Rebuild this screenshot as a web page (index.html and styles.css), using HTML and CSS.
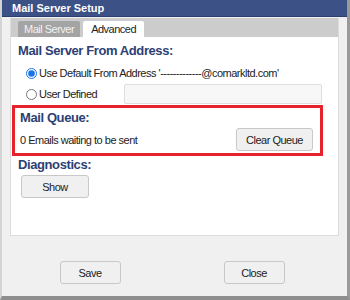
FILE: index.html
```html
<!DOCTYPE html>
<html lang="en">
<head>
    <meta charset="UTF-8">
    <title>Mail Server Setup</title>
    <link rel="stylesheet" href="styles.css">
</head>
<body>

<div class="dialog">
    <div class="titlebar">Mail Server Setup</div>

    <div class="panel">
        <div class="tabs">
            <div class="tab">Mail Server</div>
            <div class="tab active">Advanced</div>
        </div>

        <div class="content">
            <h3>Mail Server From Address:</h3>
            <label class="radio-row first-row">
                <input type="radio" name="from" checked>
                <span>Use Default From Address '-------------@comarkltd.com'</span>
            </label>
            <div class="radio-row user-row">
                <label class="user-label">
                    <input type="radio" name="from">
                    <span>User Defined</span>
                </label>
                <input type="text" class="text-input" disabled>
            </div>

            <div class="queue-box">
                <h3>Mail Queue:</h3>
                <div class="queue-row">
                    <span>0 Emails waiting to be sent</span>
                    <button class="btn clear-btn">Clear Queue</button>
                </div>
            </div>

            <h3>Diagnostics:</h3>
            <button class="btn show-btn">Show</button>
        </div>
    </div>

    <div class="footer">
        <button class="btn footer-btn">Save</button>
        <button class="btn footer-btn">Close</button>
    </div>
</div>

</body>
</html>
```

FILE: styles.css
```css
body {
    margin: 0;
    font-family: "Liberation Sans", Arial, sans-serif;
}
.dialog {
    width: 350px;
    height: 300px;
    box-sizing: border-box;
    background-color: #f0f0f0;
    border-left: 2px solid #d4d4d4;
    border-right: 3px solid #9a9a9a;
    border-bottom: 4px solid #8e8e8e;
    display: flex;
    flex-direction: column;
}
.titlebar {
    height: 16px;
    line-height: 16px;
    background-color: #3c5186;
    border-bottom: 1px solid #2c3e6e;
    color: white;
    font-size: 11px;
    font-weight: bold;
    padding-left: 10px;
}
.panel {
    margin: 1px 8px 0 8px;
    height: 217px;
    background-color: white;
    border: 1px solid #dcdcdc;
    border-top: none;
}
.tabs {
    background-color: #cccccc;
    height: 19px;
    display: flex;
    align-items: flex-end;
    gap: 3px;
    padding-left: 7px;
}
.tab {
    height: 16px;
    line-height: 16px;
    padding: 0 6px;
    font-size: 11px;
    letter-spacing: -0.5px;
    background-color: #a4a4a4;
    color: #f2f2f2;
    border-radius: 2px 2px 0 0;
}
.tab.active {
    background-color: white;
    color: #222;
    padding: 0 8px;
}
.content {
    padding: 0 7px;
}
h3 {
    margin: 0;
    font-size: 13px;
    line-height: 17px;
    letter-spacing: -0.4px;
    font-weight: bold;
    color: #2d3f75;
}
.content > h3:first-child {
    padding-top: 5px;
}
.radio-row {
    display: flex;
    align-items: center;
    font-size: 11px;
    letter-spacing: -0.5px;
    color: #222;
    margin-left: 8px;
    height: 20px;
}
.first-row {
    margin-top: 3px;
    height: 22px;
}
.radio-row input[type="radio"] {
    width: 11px;
    height: 11px;
    margin: 0 2px 0 0;
    accent-color: #1a73e8;
}
.user-label {
    display: flex;
    align-items: center;
    width: 98px;
}
.text-input {
    width: 198px;
    height: 20px;
    box-sizing: border-box;
    border: 1px solid #dedede;
    border-radius: 2px;
    background-color: #f7f7f7;
}
.queue-box {
    margin: 1px 0 0 -6px;
    width: 311px;
    height: 51px;
    box-sizing: border-box;
    border: 3px solid #e8222c;
    padding: 1px 0 0 5px;
}
.queue-row {
    display: flex;
    justify-content: space-between;
    align-items: center;
    font-size: 11px;
    letter-spacing: -0.5px;
    color: #222;
    margin-top: 2px;
    padding-right: 7px;
}
.btn {
    font-family: "Liberation Sans", Arial, sans-serif;
    font-size: 11px;
    letter-spacing: -0.5px;
    color: #222;
    background-color: #f0f0f0;
    border: 1px solid #c8c8c8;
    border-radius: 3px;
    height: 23px;
    padding: 0;
}
.clear-btn {
    width: 77px;
}
.show-btn {
    width: 68px;
    margin: 2px 0 0 3px;
}
.footer {
    display: flex;
    justify-content: center;
    gap: 103px;
    margin-top: 25px;
    padding-right: 5px;
}
.footer-btn {
    width: 61px;
}
```
